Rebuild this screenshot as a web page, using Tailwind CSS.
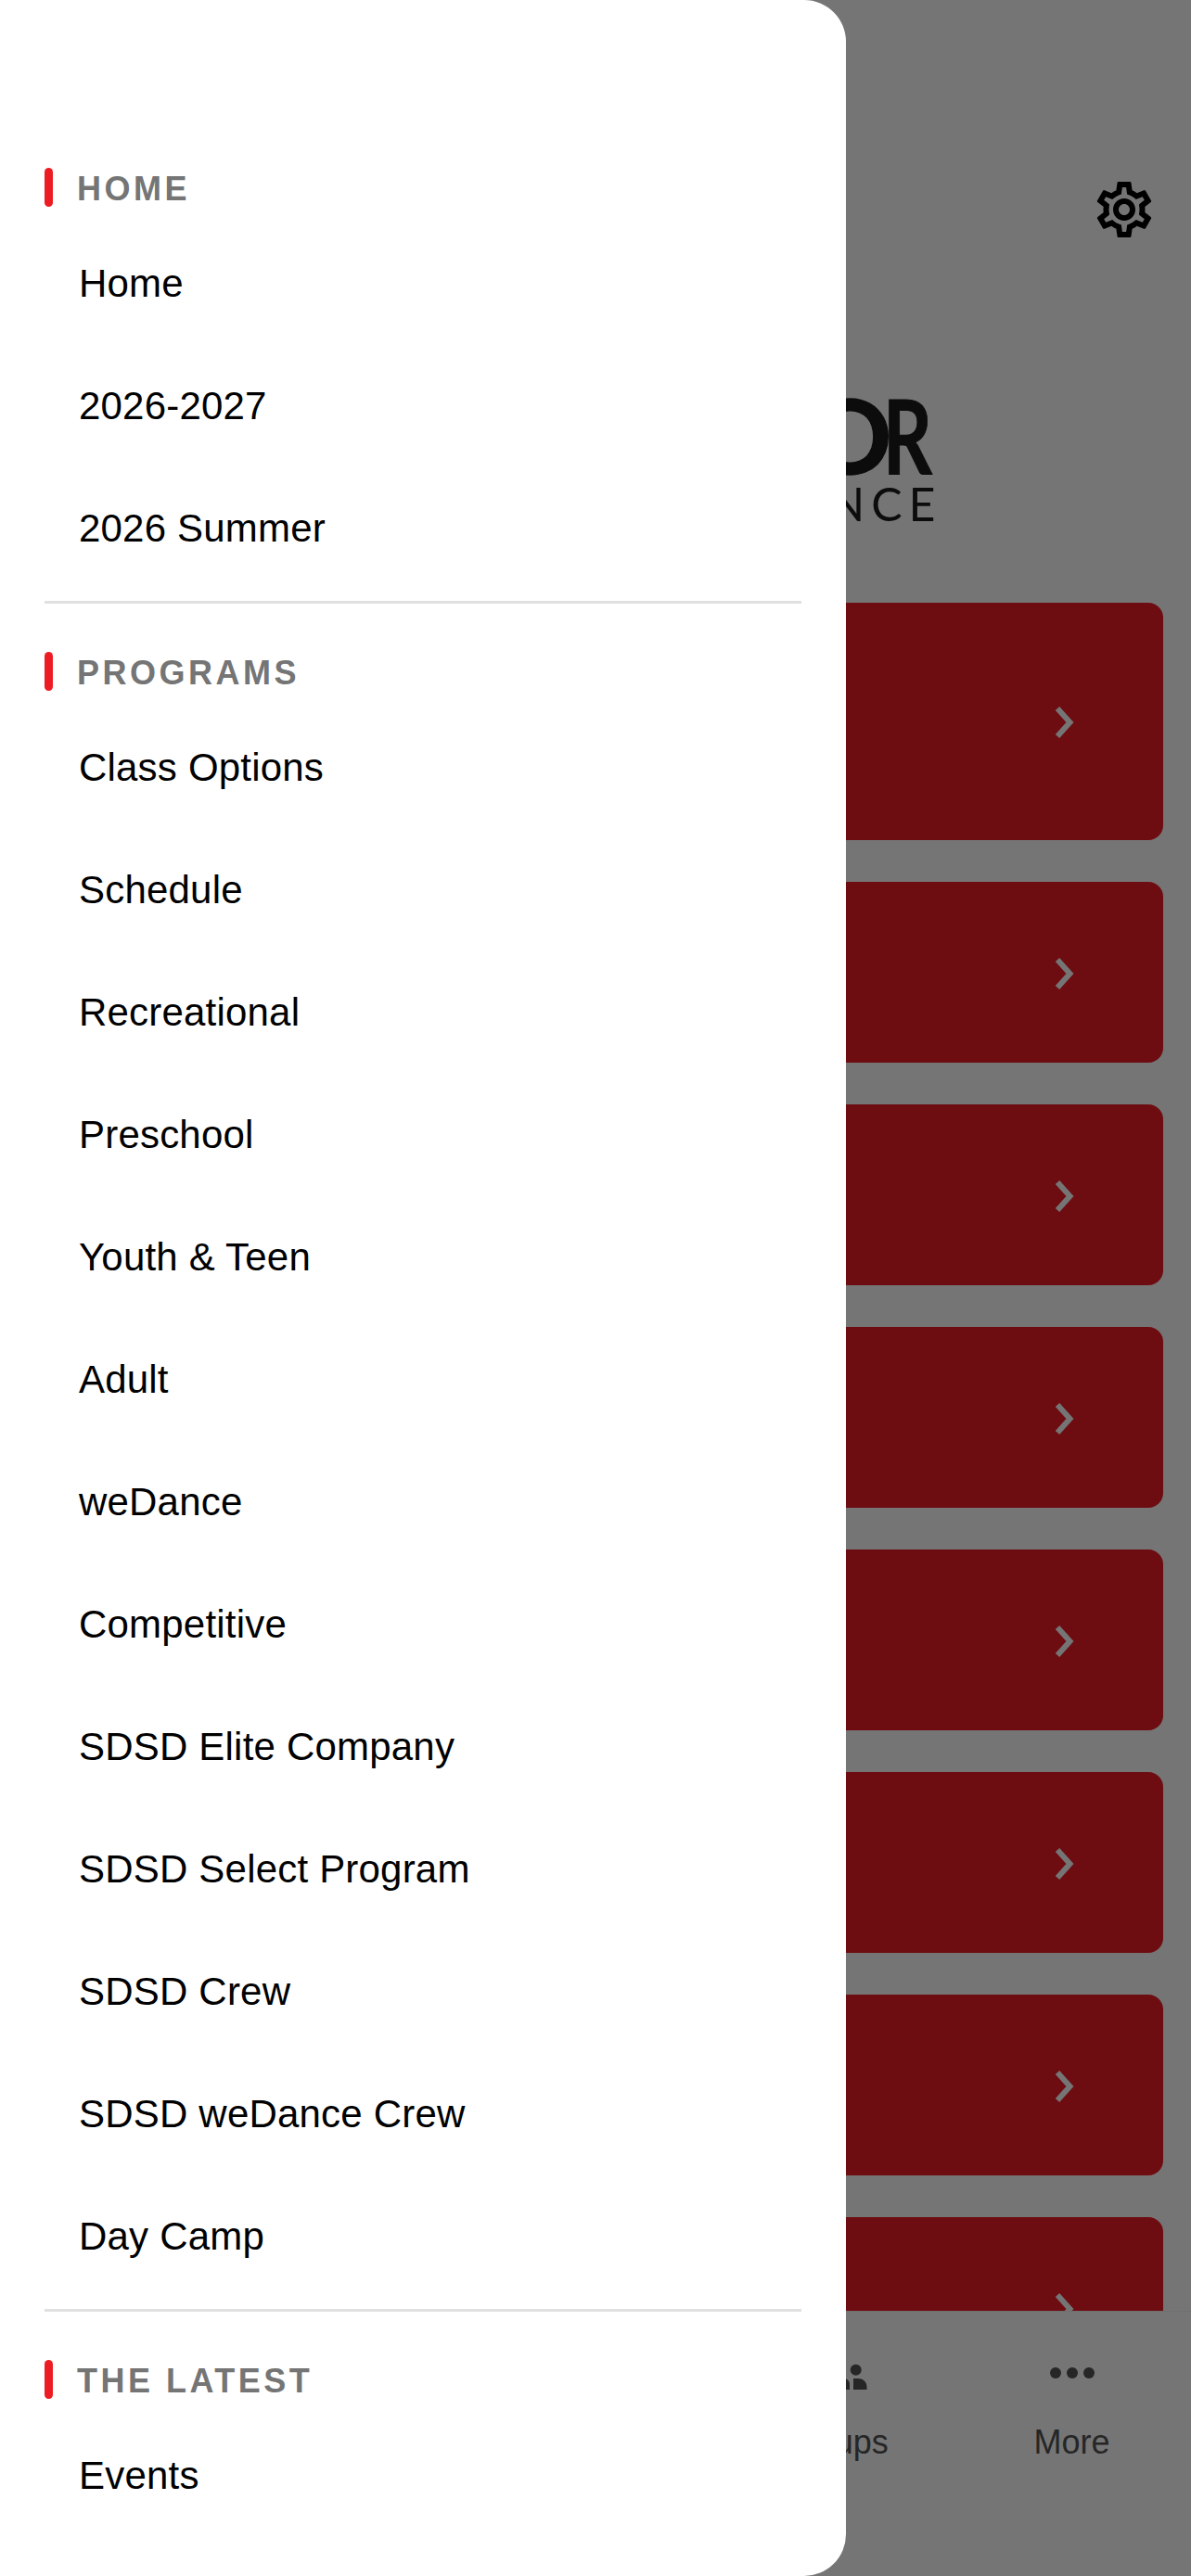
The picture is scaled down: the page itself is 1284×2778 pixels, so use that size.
<!DOCTYPE html>
<html>
<head>
<meta charset="utf-8">
<script src="https://cdn.jsdelivr.net/npm/@tailwindcss/browser@4"></script>
</head>
<body class="m-0">
<div class="relative w-[1284px] h-[2778px] overflow-hidden bg-[#757575] font-['Liberation_Sans',Arial,sans-serif]">

  <!-- page behind the drawer -->
  <div class="h-[2492px] overflow-hidden flex flex-col">
    <div class="h-[650px] shrink-0 pt-[190px]">
      <div class="flex justify-end pr-[36px]">
        <svg class="w-[72px] h-[72px] block" viewBox="0 0 24 24" fill="#000"><path d="M19.43 12.98c.04-.32.07-.64.07-.98 0-.34-.03-.66-.07-.98l2.11-1.65c.19-.15.24-.42.12-.64l-2-3.46c-.09-.16-.26-.25-.44-.25-.06 0-.12.01-.17.03l-2.49 1c-.52-.4-1.08-.73-1.69-.98l-.38-2.65C14.46 2.18 14.25 2 14 2h-4c-.25 0-.46.18-.49.42l-.38 2.65c-.61.25-1.17.59-1.69.98l-2.49-1c-.06-.02-.12-.03-.18-.03-.17 0-.34.09-.43.25l-2 3.46c-.13.22-.07.49.12.64l2.11 1.65c-.04.32-.07.65-.07.98 0 .33.03.66.07.98l-2.11 1.65c-.19.15-.24.42-.12.64l2 3.46c.09.16.26.25.44.25.06 0 .12-.01.17-.03l2.49-1c.52.4 1.08.73 1.69.98l.38 2.65c.03.24.24.42.49.42h4c.25 0 .46-.18.49-.42l.38-2.65c.61-.25 1.17-.59 1.69-.98l2.49 1c.06.02.12.03.18.03.17 0 .34-.09.43-.25l2-3.46c.12-.22.07-.49-.12-.64l-2.11-1.65zm-1.98-1.71c.04.31.05.52.05.73 0 .21-.02.43-.05.73l-.14 1.13.89.7 1.08.84-.7 1.21-1.27-.51-1.04-.42-.9.68c-.43.32-.84.56-1.25.73l-1.06.43-.16 1.13-.2 1.35h-1.4l-.19-1.35-.16-1.13-1.06-.43c-.43-.18-.83-.41-1.23-.71l-.91-.7-1.06.43-1.27.51-.7-1.21 1.08-.84.89-.7-.14-1.13c-.03-.31-.05-.54-.05-.74s.02-.43.05-.73l.14-1.13-.89-.7-1.08-.84.7-1.21 1.27.51 1.04.42.9-.68c.43-.32.84-.56 1.25-.73l1.06-.43.16-1.13.2-1.35h1.39l.19 1.35.16 1.13 1.06.43c.43.18.83.41 1.23.71l.91.7 1.06-.43 1.27-.51.7 1.21-1.07.85-.89.7.14 1.13zM12 8c-2.21 0-4 1.79-4 4s1.79 4 4 4 4-1.79 4-4-1.79-4-4-4zm0 6c-1.1 0-2-.9-2-2s.9-2 2-2 2 .9 2 2-.9 2-2 2z"/></svg>
      </div>
      <svg class="block ml-[860px] mt-[158px] w-[200px] h-[150px]" viewBox="0 0 200 150" fill="#0d0c0d" stroke="#0d0c0d" stroke-width="0" font-family="Lato, sans-serif">
        <text x="11" y="91" font-size="112" font-weight="700" stroke-width="1.5">O</text>
        <text x="92" y="91" font-size="112" font-weight="700" stroke-width="1" textLength="53" lengthAdjust="spacingAndGlyphs">R</text>
        <text x="155.5" y="142" font-size="50" font-weight="400" letter-spacing="7" text-anchor="end">NCE</text>
      </svg>
    </div>

    <div class="flex flex-col gap-[45px] px-[30px]">
      <div class="h-[256px] bg-[#6d0d11] rounded-[16px] flex items-center justify-end pr-[96px] shrink-0"><svg class="w-[22px] h-[38px] mt-[2px]" viewBox="0 0 22 38" fill="none" stroke="#757575" stroke-width="6"><path d="M4 4l13.5 15L4 34"/></svg></div>
      <div class="h-[195px] bg-[#6d0d11] rounded-[16px] flex items-center justify-end pr-[96px] shrink-0"><svg class="w-[22px] h-[38px] mt-[2px]" viewBox="0 0 22 38" fill="none" stroke="#757575" stroke-width="6"><path d="M4 4l13.5 15L4 34"/></svg></div>
      <div class="h-[195px] bg-[#6d0d11] rounded-[16px] flex items-center justify-end pr-[96px] shrink-0"><svg class="w-[22px] h-[38px] mt-[2px]" viewBox="0 0 22 38" fill="none" stroke="#757575" stroke-width="6"><path d="M4 4l13.5 15L4 34"/></svg></div>
      <div class="h-[195px] bg-[#6d0d11] rounded-[16px] flex items-center justify-end pr-[96px] shrink-0"><svg class="w-[22px] h-[38px] mt-[2px]" viewBox="0 0 22 38" fill="none" stroke="#757575" stroke-width="6"><path d="M4 4l13.5 15L4 34"/></svg></div>
      <div class="h-[195px] bg-[#6d0d11] rounded-[16px] flex items-center justify-end pr-[96px] shrink-0"><svg class="w-[22px] h-[38px] mt-[2px]" viewBox="0 0 22 38" fill="none" stroke="#757575" stroke-width="6"><path d="M4 4l13.5 15L4 34"/></svg></div>
      <div class="h-[195px] bg-[#6d0d11] rounded-[16px] flex items-center justify-end pr-[96px] shrink-0"><svg class="w-[22px] h-[38px] mt-[2px]" viewBox="0 0 22 38" fill="none" stroke="#757575" stroke-width="6"><path d="M4 4l13.5 15L4 34"/></svg></div>
      <div class="h-[195px] bg-[#6d0d11] rounded-[16px] flex items-center justify-end pr-[96px] shrink-0"><svg class="w-[22px] h-[38px] mt-[2px]" viewBox="0 0 22 38" fill="none" stroke="#757575" stroke-width="6"><path d="M4 4l13.5 15L4 34"/></svg></div>
      <div class="h-[195px] bg-[#6d0d11] rounded-[16px] flex items-center justify-end pr-[96px] shrink-0"><svg class="w-[22px] h-[38px] mt-[2px]" viewBox="0 0 22 38" fill="none" stroke="#757575" stroke-width="6"><path d="M4 4l13.5 15L4 34"/></svg></div>
    </div>
  </div>

  <!-- bottom tab bar -->
  <div class="h-[286px] border-t border-t-[#6f6f6f] grid grid-cols-5 text-[#262626]">
    <div></div>
    <div></div>
    <div></div>
    <div class="flex flex-col items-center pt-[56px]">
      <div class="h-[30px]">
        <svg class="block w-[72px] h-[30px]" viewBox="0 0 72 30" fill="#262626"><circle cx="12.3" cy="6.7" r="6"/><circle cx="59.7" cy="6.7" r="6"/><path d="M57 28V16h5c6 0 9.500 4 9.500 9v3zM14.500 28V16H10c-6 0-9.500 4-9.500 9v3zM19 28V22c0-3.500 3-6 6-6h22c3 0 6 2.500 6 6v6z"/></svg>
      </div>
      <div class="mt-[33px] text-[36px] leading-[44px]">Groups</div>
    </div>
    <div class="flex flex-col items-center pt-[56px]">
      <div class="h-[30px]">
        <svg class="block w-[48px] h-[12px] mt-[4px]" viewBox="0 0 48 12" fill="#262626"><circle cx="6" cy="6" r="6"/><circle cx="24" cy="6" r="6"/><circle cx="42" cy="6" r="6"/></svg>
      </div>
      <div class="mt-[33px] text-[36px] leading-[44px]">More</div>
    </div>
  </div>

  <!-- drawer -->
  <nav class="absolute left-0 top-0 w-[912px] h-[2778px] bg-white rounded-r-[45px] overflow-hidden pt-[171px] text-black text-[42px] leading-[50px] tracking-[0.2px]">
    <section class="mx-[48px] pb-[12px] border-b-[3px] border-b-[#e0e0e0]">
      <div class="flex items-center gap-[26px] h-[62px] mb-[7px]"><span class="w-[9px] h-[42px] rounded-full bg-[#ed1c24]"></span><span class="font-bold text-[36px] leading-[42px] tracking-[3.5px] text-[#757575] mt-[3px]">HOME</span></div>
      <div class="h-[132px] flex items-center pl-[37px]">Home</div>
      <div class="h-[132px] flex items-center pl-[37px]">2026-2027</div>
      <div class="h-[132px] flex items-center pl-[37px]">2026 Summer</div>
    </section>
    <section class="mx-[48px] pt-[42px] pb-[12px] border-b-[3px] border-b-[#e0e0e0]">
      <div class="flex items-center gap-[26px] h-[62px] mb-[7px]"><span class="w-[9px] h-[42px] rounded-full bg-[#ed1c24]"></span><span class="font-bold text-[36px] leading-[42px] tracking-[3.5px] text-[#757575] mt-[3px]">PROGRAMS</span></div>
      <div class="h-[132px] flex items-center pl-[37px]">Class Options</div>
      <div class="h-[132px] flex items-center pl-[37px]">Schedule</div>
      <div class="h-[132px] flex items-center pl-[37px]">Recreational</div>
      <div class="h-[132px] flex items-center pl-[37px]">Preschool</div>
      <div class="h-[132px] flex items-center pl-[37px]">Youth &amp; Teen</div>
      <div class="h-[132px] flex items-center pl-[37px]">Adult</div>
      <div class="h-[132px] flex items-center pl-[37px]">weDance</div>
      <div class="h-[132px] flex items-center pl-[37px]">Competitive</div>
      <div class="h-[132px] flex items-center pl-[37px]">SDSD Elite Company</div>
      <div class="h-[132px] flex items-center pl-[37px]">SDSD Select Program</div>
      <div class="h-[132px] flex items-center pl-[37px]">SDSD Crew</div>
      <div class="h-[132px] flex items-center pl-[37px]">SDSD weDance Crew</div>
      <div class="h-[132px] flex items-center pl-[37px]">Day Camp</div>
    </section>
    <section class="mx-[48px] pt-[42px]">
      <div class="flex items-center gap-[26px] h-[62px] mb-[7px]"><span class="w-[9px] h-[42px] rounded-full bg-[#ed1c24]"></span><span class="font-bold text-[36px] leading-[42px] tracking-[3.5px] text-[#757575] mt-[3px]">THE LATEST</span></div>
      <div class="h-[132px] flex items-center pl-[37px]">Events</div>
    </section>
  </nav>
</div>
</body>
</html>
